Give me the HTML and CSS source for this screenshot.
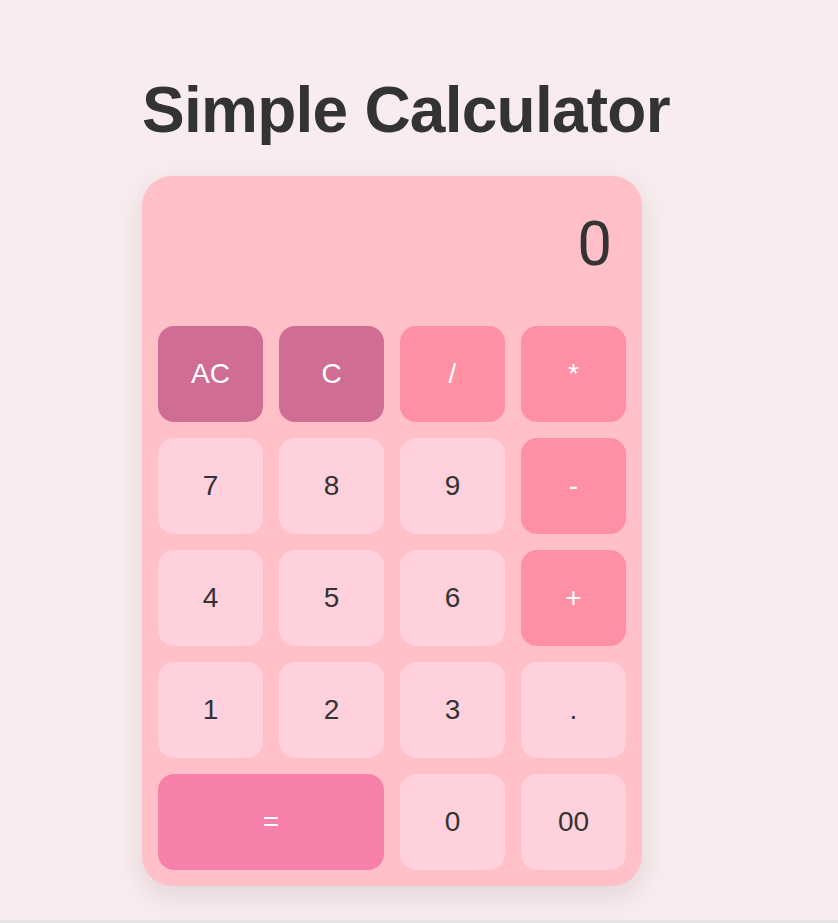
FILE: index.html
```html
<!DOCTYPE html>
<html lang="en">
<head>
<meta charset="utf-8">
<title>Simple Calculator</title>
<link rel="stylesheet" href="styles.css">
</head>
<body>
<div class="page">
  <h1 class="title">Simple Calculator</h1>
  <div class="calc">
    <div class="display">0</div>
    <div class="keys">
      <button class="key key-clear">AC</button>
      <button class="key key-clear">C</button>
      <button class="key key-op">/</button>
      <button class="key key-op">*</button>
      <button class="key">7</button>
      <button class="key">8</button>
      <button class="key">9</button>
      <button class="key key-op">-</button>
      <button class="key">4</button>
      <button class="key">5</button>
      <button class="key">6</button>
      <button class="key key-op">+</button>
      <button class="key">1</button>
      <button class="key">2</button>
      <button class="key">3</button>
      <button class="key">.</button>
      <button class="key key-eq">=</button>
      <button class="key">0</button>
      <button class="key">00</button>
    </div>
  </div>
</div>
</body>
</html>
```
FILE: styles.css
```css
html {
  background: #e4e2e3;
}
body {
  margin: 0;
  height: 920px;
  background: #f9ecef;
  font-family: "Liberation Sans", Arial, sans-serif;
  color: #333333;
}
.page {
  padding: 73px 0 0 142px;
}
.title {
  margin: 0 0 29px;
  font-size: 64px;
  line-height: 74px;
  letter-spacing: -0.75px;
  font-weight: 700;
  color: #333333;
}
.calc {
  width: 500px;
  box-sizing: border-box;
  padding: 16px;
  background: #ffc0c8;
  border-radius: 30px;
  box-shadow: 0 10px 30px rgba(0, 0, 0, 0.1);
}
.display {
  height: 118px;
  box-sizing: border-box;
  padding: 14px 14px 0;
  margin-bottom: 16px;
  text-align: right;
  font-family: Roboto, sans-serif;
  font-weight: 400;
  font-size: 62px;
  line-height: 75px;
  color: #333333;
}
.keys {
  display: grid;
  grid-template-columns: repeat(4, 105px);
  grid-auto-rows: 96px;
  gap: 16px;
}
.key {
  border: none;
  border-radius: 16px;
  background: #ffd1dc;
  color: #333333;
  font-family: "Liberation Sans", Arial, sans-serif;
  font-size: 28px;
  padding: 0;
}
.key-clear {
  background: #d06d95;
  color: #ffffff;
}
.key-op {
  background: #ff8fa3;
  color: #ffffff;
}
.key-eq {
  grid-column: span 2;
  background: #f780ab;
  color: #ffffff;
}
```
